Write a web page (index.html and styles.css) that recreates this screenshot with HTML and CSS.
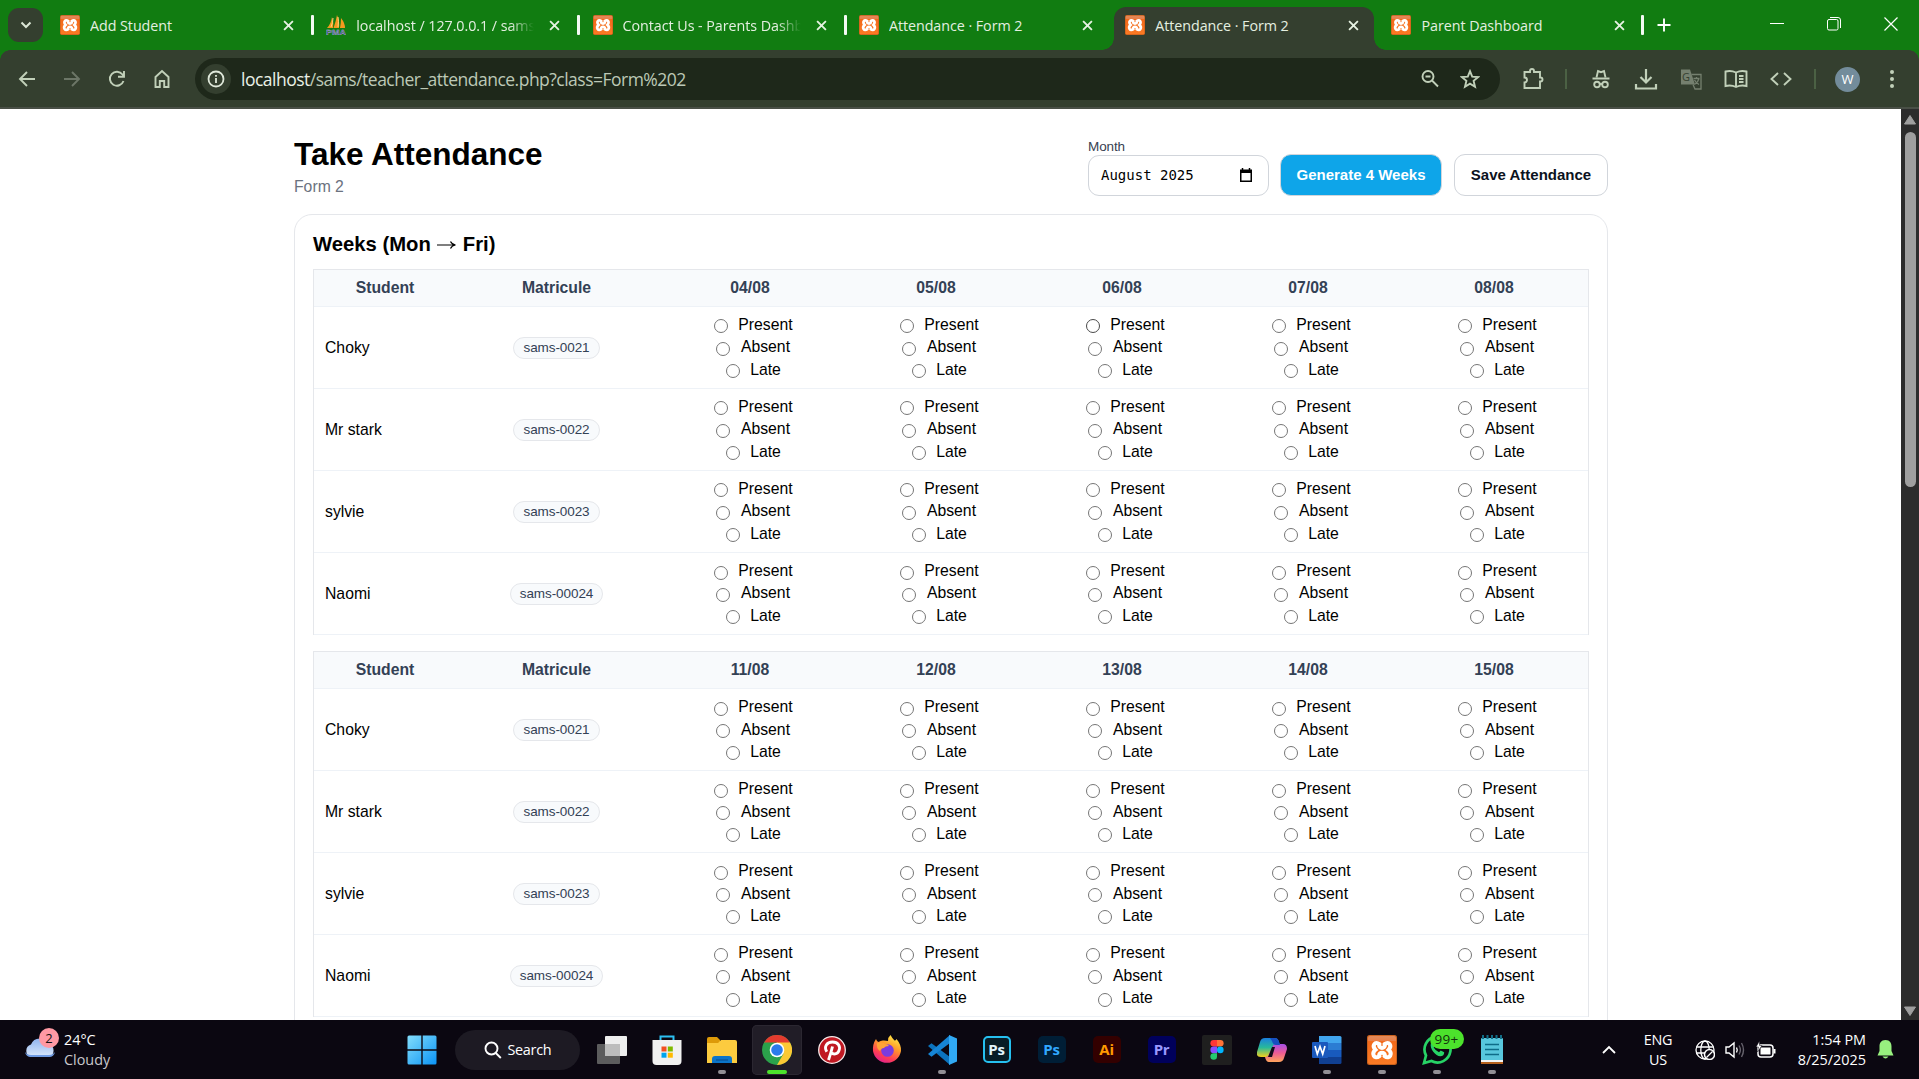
FILE: index.html
```html
<!DOCTYPE html>
<html lang="en">
<head>
<meta charset="utf-8">
<title>Attendance · Form 2</title>
<link rel="stylesheet" href="styles.css">
</head>
<body>
<svg class="defs" width="0" height="0" aria-hidden="true">
  <linearGradient id="org" x1="0" y1="0" x2="0" y2="1"><stop offset="0" stop-color="#e08a5c"/><stop offset=".16" stop-color="#e9804a"/><stop offset=".2" stop-color="#f3691a"/><stop offset="1" stop-color="#fb7a24"/></linearGradient>
  <symbol id="xampp" viewBox="0 0 30 30">
    <rect width="30" height="30" rx="2.5" fill="#c9601c"/><rect x="1" y="1" width="28" height="28" rx="2" fill="url(#org)"/>
    <path d="M12.5 9.2C8 5.800 4.500 10.500 8.500 14.800C4 18.500 7 25 12.500 21.200M17.500 9.200C22 5.800 25.500 10.500 21.500 14.800C26 18.500 23 25 17.500 21.200M12 9.500C12 14 18 14 18 9.500M12 21C12 16.500 18 16.500 18 21" fill="none" stroke="#fff" stroke-width="4" stroke-linecap="round"/>
  </symbol>
  <symbol id="x" viewBox="0 0 10 10"><path d="M1 1l8 8M9 1L1 9" stroke="#e6f2e2" stroke-width="1.7"/></symbol>
</svg>

<header class="tabs">
  <button class="tab-search"><svg width="12" height="8" viewBox="0 0 12 8"><path d="M1.500 1.500L6 6l4.500-4.500" fill="none" stroke="#dbe6d5" stroke-width="2"/></svg></button>
  <div class="tab"><svg class="fav"><use href="#xampp"/></svg><span class="tt">Add Student</span><svg class="close"><use href="#x"/></svg><i class="sep"></i></div>
  <div class="tab"><svg class="fav" viewBox="0 0 20 20"><path d="M1 13Q5 9 6 2Q8 8 7 13zM7.500 13Q10 6 11 0Q14 7 13 13zM14 13Q15 8 15 3Q19 8 19 13z" fill="#f39a1e"/><path d="M5 12Q7 8 7 3M12 12Q13 6 12 2" stroke="#ffd37a" fill="none"/><text x="0" y="19.500" textLength="20" lengthAdjust="spacingAndGlyphs" class="pma">PMA</text></svg><span class="tt faded">localhost / 127.0.0.1 / sams</span><svg class="close"><use href="#x"/></svg><i class="sep"></i></div>
  <div class="tab"><svg class="fav"><use href="#xampp"/></svg><span class="tt faded">Contact Us - Parents Dashboard</span><svg class="close"><use href="#x"/></svg><i class="sep"></i></div>
  <div class="tab"><svg class="fav"><use href="#xampp"/></svg><span class="tt">Attendance · Form 2</span><svg class="close"><use href="#x"/></svg></div>
  <div class="tab active"><svg class="fav"><use href="#xampp"/></svg><span class="tt">Attendance · Form 2</span><svg class="close"><use href="#x"/></svg></div>
  <div class="tab"><svg class="fav"><use href="#xampp"/></svg><span class="tt">Parent Dashboard</span><svg class="close"><use href="#x"/></svg><i class="sep"></i></div>
  <svg class="new" width="14" height="14" viewBox="0 0 14 14"><path d="M7 .5v13M.5 7h13" stroke="#fff" stroke-width="1.9"/></svg>
  <div class="win">
    <svg width="14" height="14" viewBox="0 0 14 14"><path d="M0 6.500h14" stroke="#fff"/></svg>
    <svg width="14" height="14" viewBox="0 0 14 14" fill="none" stroke="#fff"><rect x=".5" y="2.500" width="10.500" height="10.500" rx="1.500"/><path d="M3 .5h8a2.500 2.500 0 0 1 2.500 2.500v8"/></svg>
    <svg width="14" height="14" viewBox="0 0 14 14"><path d="M.5.5l13 13M13.500.5l-13 13" stroke="#fff" stroke-width="1.200"/></svg>
  </div>
</header>

<nav class="toolbar">
  <div class="nav">
    <svg viewBox="0 0 20 20"><path d="M18 10H3M10 3l-7 7 7 7"/></svg>
    <svg viewBox="0 0 20 20" class="dim"><path d="M2 10h15M10 3l7 7-7 7"/></svg>
    <svg viewBox="0 0 20 20"><path d="M16.500 12A7 7 0 1 1 15.500 5.500L17 7.500M17 2v5.800h-6"/></svg>
    <svg viewBox="0 0 20 20"><path d="M3.500 18V8L10 2l6.500 6v10h-4.300v-6H7.800v6z"/></svg>
  </div>
  <div class="omnibox">
    <span class="info"><svg width="18" height="18" viewBox="0 0 18 18"><circle cx="9" cy="9" r="7.500" fill="none" stroke="#dfe8da" stroke-width="1.800"/><path d="M9 8v5M9 5v1.700" stroke="#dfe8da" stroke-width="1.800"/></svg></span>
    <span class="url"><b>localhost</b>/sams/teacher_attendance.php?class=Form%202</span>
    <span class="obx">
      <svg viewBox="0 0 20 20"><circle cx="8" cy="7.500" r="5.500"/><path d="M12 11.500l6 6M5.500 7.500h5"/></svg>
      <svg viewBox="0 0 20 20"><path d="M10 2.200l2.200 5.400 5.800.5-4.400 3.800 1.400 5.800-5-3.100-5 3.100 1.400-5.800L2 8.100l5.800-.5z"/></svg>
    </span>
  </div>
  <div class="ext">
    <svg viewBox="0 0 24 24"><path d="M3.500 5H9V4a2 2 0 0 1 4 0v1h6v5.500h.5a2 2 0 0 1 0 4H19V21H3.500v-5.500a2.500 2.500 0 0 0 0-5z"/></svg>
    <i></i>
    <svg viewBox="0 0 24 24"><path d="M3.500 11.500h17" stroke-width="2"/><path d="M7.500 10.500L9 4l3 1.200L15 4l1.500 6.500" /><circle cx="8" cy="17.500" r="2.800"/><circle cx="16" cy="17.500" r="2.800"/><path d="M10.800 17h2.400"/></svg>
    <svg viewBox="0 0 24 24"><path d="M12 2v13M6.500 10l5.500 5.500 5.500-5.500M2 17v4.500h20V17" stroke-width="2.200"/></svg>
    <svg viewBox="0 0 24 24" class="tr"><path d="M2 2.500h9l5 15H2z" fill="#75806f" stroke="none"/><path d="M12.500 7.500h9.500v14.500h-6l-2-4.500M14.500 11.500h6M17.500 10v1.500M20 11.500q-1 4-4.500 6M15.500 13q1.500 3 4.500 4.500" stroke-width="1.300"/><text x="3" y="14">G</text></svg>
    <svg viewBox="0 0 24 24"><path d="M12 5.500Q7 3 1.500 4.500v14.500Q7 17.500 12 20q5-2.500 10.500-1V4.500Q17 3 12 5.500zM12 5.500V20M15 9h4.500M15 12h4.500M15 15h4.500"/></svg>
    <svg viewBox="0 0 24 24"><path d="M9 6l-6.500 6L9 18M15 6l6.500 6L15 18"/></svg>
    <i></i>
    <span class="avatar">W</span>
    <svg viewBox="0 0 24 24"><g fill="#c1d0b9" stroke="none"><circle cx="12" cy="5" r="2"/><circle cx="12" cy="12" r="2"/><circle cx="12" cy="19" r="2"/></g></svg>
  </div>
</nav>

<div class="view">
  <main class="page">
    <div class="head">
      <div><h1>Take Attendance</h1><div class="muted">Form 2</div></div>
      <div class="actions">
        <div class="field"><label>Month</label><div class="month"><span>August 2025</span><svg width="12" height="14" viewBox="0 0 12 14"><path d="M0 1.500h12V14H0zM1.500 5v7.500h9V5z" fill="#000" fill-rule="evenodd"/><path d="M2.500 0v2M9.500 0v2" stroke="#000" stroke-width="1.500"/></svg></div></div>
        <button class="btn primary">Generate 4 Weeks</button>
        <button class="btn">Save Attendance</button>
      </div>
    </div>
    <section class="card">
      <h2>Weeks (Mon <svg width="19" height="10" viewBox="0 0 19 10"><path d="M0 5h17.500M13.500 1.500Q15 4.500 18.500 5Q15 5.500 13.500 8.500" fill="none" stroke="#000" stroke-width="1.200"/></svg> Fri)</h2>
      <div id="weeks"></div>
    </section>
  </main>
  <div class="scroll"><svg width="12" height="10" viewBox="0 0 12 10"><path d="M6 .5L11.500 9H.5z" fill="#9f9f9f" stroke="#9f9f9f" stroke-linejoin="round"/></svg><div class="thumb"></div><svg width="12" height="10" viewBox="0 0 12 10"><path d="M6 9.500L.5 1h11z" fill="#9f9f9f" stroke="#9f9f9f" stroke-linejoin="round"/></svg></div>
</div>

<footer class="taskbar">
  <div class="weather">
    <span class="cloud"><svg width="32" height="22" viewBox="0 0 32 22"><linearGradient id="cl" x1="0" y1="0" x2="0" y2="1"><stop offset="0" stop-color="#8fb3ee"/><stop offset="1" stop-color="#dbe9fc"/></linearGradient><path d="M7 21a6.500 6.500 0 0 1 0-12.500A9.500 9.500 0 0 1 24.500 8a6.700 6.700 0 0 1 0 13z" fill="url(#cl)"/><path d="M1 16q1 5 6 5h18q5 0 6-5-2 3-6 3H7q-4 0-6-3z" fill="#6f9be4"/></svg><em>2</em></span>
    <span class="wt">24°C<br><small>Cloudy</small></span>
  </div>
  <div class="apps">
    <span class="app start"><svg width="30" height="30" viewBox="0 0 30 30"><linearGradient id="wn" x1="0" y1="0" x2="1" y2="1"><stop offset="0" stop-color="#83defc"/><stop offset="1" stop-color="#0b93f5"/></linearGradient><path d="M.5 2q0-1.500 1.500-1.500h12.300v13.800H.5zM15.700.5H28q1.500 0 1.500 1.500v12.300H15.700zM.5 15.700h13.800v13.800H2q-1.500 0-1.500-1.500zM15.700 15.700h13.800V28q0 1.500-1.500 1.500H15.700z" fill="url(#wn)"/></svg></span>
    <span class="search"><svg width="18" height="18" viewBox="0 0 18 18" fill="none" stroke="#fff" stroke-width="1.900"><circle cx="7.500" cy="7.500" r="6"/><path d="M11.800 12l5 5"/></svg>Search</span>
    <span class="app tv"><svg width="30" height="30" viewBox="0 0 30 30"><rect x="8" y="1" width="22" height="20" rx="1" fill="#eee"/><rect x="0" y="9" width="23" height="20" rx="1" fill="#6b6b6b" opacity=".85"/><rect x="8" y="9" width="15" height="12" fill="#bdbdbd"/></svg></span>
    <span class="app"><svg width="30" height="30" viewBox="0 0 30 30"><path d="M8.500 6V1.500h13V6" fill="none" stroke="#2cc0f2" stroke-width="2"/><path d="M.5 5h29v21q0 4-4 4h-21q-4 0-4-4z" fill="#f1f1f1"/><path d="M9.500 11.500h5v5h-5z" fill="#f25022"/><path d="M15.800 11.500h5v5h-5z" fill="#7fba00"/><path d="M9.500 17.700h5v5h-5z" fill="#00a4ef"/><path d="M15.800 17.700h5v5h-5z" fill="#ffb900"/></svg></span>
    <span class="app run"><svg width="30" height="30" viewBox="0 0 30 30"><path d="M0 4q0-2 2-2h8l3 3v5H0z" fill="#dd9a09"/><path d="M0 8h11l3-3h14q2 0 2 2v21H0z" fill="#fccb3f"/><path d="M5 28v-4q0-3 3-3h14q3 0 3 3v4z" fill="#0b74c9"/><path d="M9 25h12" stroke="#0a4f94" stroke-width="1.200"/></svg></span>
    <span class="app on"><svg width="30" height="30" viewBox="0 0 30 30"><circle cx="15" cy="15" r="15" fill="#2ba14b"/><path d="M15 15L2 7.500A15 15 0 0 1 28 7.500z" fill="#e33b2e"/><path d="M15 7.500h13A15 15 0 0 1 15 30l6.500-11.200z" fill="#fcc934"/><path d="M2 7.500L8.500 18.800 15 7.500z" fill="#2ba14b"/><circle cx="15" cy="15" r="7.300" fill="#fff"/><circle cx="15" cy="15" r="5.800" fill="#2b7bea"/></svg></span>
    <span class="app"><svg width="28" height="28" viewBox="0 0 28 28"><circle cx="14" cy="14" r="13.300" fill="#c01923" stroke="#f5e9e9" stroke-width="1.300"/><path d="M8.800 15.800C5.500 10.500 9 6 14.500 6s8.200 4.200 6.500 8.500c-1.500 4-6 4.500-7.200 1.800M14.500 10.500Q13 17 10.500 24" fill="none" stroke="#fff" stroke-width="2.900"/></svg></span>
    <span class="app"><svg width="30" height="30" viewBox="0 0 30 30"><linearGradient id="ff" x1=".8" y1="0" x2=".3" y2="1"><stop offset="0" stop-color="#fff04a"/><stop offset=".4" stop-color="#ff9a2a"/><stop offset=".75" stop-color="#ff3d55"/><stop offset="1" stop-color="#e0208f"/></linearGradient><path d="M18.500 0q1.500 3 4 5.500 1 .5 2-1.500 5 6 4.500 12A14.200 14.200 0 0 1 1 16Q.5 9 4 4q1 3 2.500 3Q9 5 12 5.500q2 0 4 .5Q16 2 18.500 0z" fill="url(#ff)"/><circle cx="15.500" cy="15.500" r="6.300" fill="#7a3be0"/><path d="M5 8q5-2 8 1 3 0 4 2-4 0-5 2-3 0-4 3Q4 13 5 8z" fill="#ffa436"/></svg></span>
    <span class="app run"><svg width="30" height="30" viewBox="0 0 30 30"><path d="M1 11l3.500-2.700L23 22v8z" fill="#0b73be"/><path d="M1 19l3.500 2.700L23 8V0z" fill="#1685d6"/><path d="M22 0l8 3.500v23L22 30z" fill="#31a9f4"/></svg></span>
    <span class="app"><b class="ad ps1">Ps</b></span>
    <span class="app"><b class="ad ps2">Ps</b></span>
    <span class="app"><b class="ad ai">Ai</b></span>
    <span class="app"><b class="ad pr">Pr</b></span>
    <span class="app"><svg width="30" height="30" viewBox="0 0 30 30"><rect width="30" height="30" rx="2" fill="#1f1f1f"/><path d="M15 5h-3.300a3.300 3.300 0 0 0 0 6.600H15z" fill="#ff3737"/><path d="M15 5h3.300a3.300 3.300 0 0 1 0 6.600H15z" fill="#ff7237"/><path d="M15 11.600h-3.300a3.300 3.300 0 0 0 0 6.600H15z" fill="#874fff"/><circle cx="18.300" cy="14.900" r="3.300" fill="#00b6ff"/><path d="M15 18.200h-3.300a3.300 3.300 0 1 0 3.300 3.300z" fill="#24cb71"/></svg></span>
    <span class="app"><svg width="30" height="26" viewBox="0 0 30 26"><linearGradient id="c1" x1="0" y1="0" x2="0" y2="1"><stop offset="0" stop-color="#1b7fe0"/><stop offset=".5" stop-color="#28b99a"/><stop offset="1" stop-color="#f3d01c"/></linearGradient><linearGradient id="c2" x1="0" y1="0" x2="0" y2="1"><stop offset="0" stop-color="#a64fe8"/><stop offset=".5" stop-color="#ee5b93"/><stop offset="1" stop-color="#ffa45c"/></linearGradient><path d="M8 1h10q3 0 4 4l1 3h-4q-3 0-4 3l-2 6q-1 3-4 3H4q-5 0-4-5L3 5q1-4 5-4z" fill="url(#c1)"/><path d="M22 25H12q-3 0-4-5 3 0 4-3l3-6q1-4 4-4h7q4 0 4 5l-3 9q-1 4-5 4z" fill="url(#c2)"/><path d="M13 1h5q3 0 4 4l1 3h-4q-3 0-4-4z" fill="#174fc0"/><path d="M15 10h3l-3 10h-4z" fill="#120b1a"/></svg></span>
    <span class="app run"><svg width="30" height="28" viewBox="0 0 30 28"><path d="M7 0h21q1.500 0 1.500 1.500V7H7z" fill="#41a5ee"/><path d="M7 7h22.500v7H7z" fill="#2b7cd3"/><path d="M7 14h22.500v7H7z" fill="#185abd"/><path d="M7 21h22.500v5.500q0 1.500-1.500 1.500H7z" fill="#103f91"/><rect x="0" y="6" width="16" height="16" rx="1" fill="#1a59bd"/><path d="M3 10l2.300 8L8 10.500l2.700 7.500L13 10" fill="none" stroke="#fff" stroke-width="1.700"/></svg></span>
    <span class="app run"><svg width="30" height="30"><use href="#xampp"/></svg></span>
    <span class="app run"><svg width="30" height="30" viewBox="0 0 30 30"><path d="M2 28l2-7.500A13 13 0 1 1 9.500 26z" fill="none" stroke="#27d366" stroke-width="2.700"/><path d="M9 8q2-2 3 0l1 2.500-1.300 2q2 3.500 5.300 4.800l1.700-1.800 3.500 1.800q0 4-4 4C14 21 7 14 9 8z" fill="#27d366"/></svg><em class="count">99+</em></span>
    <span class="app run"><svg width="24" height="30" viewBox="0 0 24 30"><rect x="1" y="3" width="22" height="26" rx="1" fill="#58c7dd"/><path d="M1 26h22v3H1z" fill="#b5601c"/><path d="M1 25h22v2H1z" fill="#f4f4f4"/><path d="M3 0v4M7.500 0v4M12 0v4M16.500 0v4M21 0v4" stroke="#116c86" stroke-width="2"/><path d="M5 9.500h14M5 14.500h14M5 19.500h14" stroke="#0e6c88" stroke-width="1.700"/></svg></span>
  </div>
  <div class="tray">
    <svg class="up" width="14" height="9" viewBox="0 0 14 9"><path d="M1 8l6-6 6 6" fill="none" stroke="#fff" stroke-width="1.800"/></svg>
    <span class="lang">ENG<br>US</span>
    <svg class="globe" width="20" height="20" viewBox="0 0 20 20" fill="none" stroke="#fff" stroke-width="1.300"><circle cx="10" cy="10" r="9"/><ellipse cx="10" cy="10" rx="4.200" ry="9"/><path d="M1.500 7h17M1.500 13h10"/><circle cx="14.500" cy="14.500" r="5" fill="#0b0711" stroke-width="1.500"/><path d="M11.500 17.500l6-6"/></svg>
    <svg class="vol" width="20" height="18" viewBox="0 0 20 18" fill="none" stroke="#fff" stroke-width="1.400"><path d="M1 6v6h3l5 4V2L4 6zM11.500 6.500q1.500 2.500 0 5"/><path d="M14 4.500q2.800 4.500 0 9M16.500 2q4 7 0 14" stroke="#66626c"/></svg>
    <svg class="bat" width="20" height="18" viewBox="0 0 20 18"><rect x="2" y="4" width="15" height="12" rx="3" fill="none" stroke="#fff" stroke-width="1.500"/><path d="M18.500 8v4.500" stroke="#fff" stroke-width="2"/><path d="M4.500 6.500h10v7h-10z" fill="#fff"/><path d="M3.500 0L0 6h2.500L1.500 11 6 4.500H3.500z" fill="#fff" stroke="#0b0711" stroke-width=".5"/></svg>
    <span class="clock">1:54 PM<br>8/25/2025</span>
    <svg class="bell" width="17" height="19" viewBox="0 0 17 19"><path d="M8.500 0C4 0 2.500 3 2.500 6.500V11L.5 15.500h16L14.500 11V6.500C14.500 3 13 0 8.500 0zM5.500 16.500q3 4 6 0z" fill="#98f07f"/></svg>
  </div>
</footer>
<script src="weeks.js"></script>
</body>
</html>
```

FILE: styles.css
```css
* { box-sizing: border-box; }
body { margin: 0; width: 1919px; height: 1079px; overflow: hidden; display: flex; flex-direction: column; background: #fff; font-family: "Open Sans", "Noto Sans", sans-serif; }
.defs { position: absolute; }
svg { display: block; flex: none; }
button { font: inherit; }
em { font-style: normal; }

/* tab strip */
.tabs { flex: none; height: 50px; background: #117c11; display: flex; align-items: flex-start; padding-left: 8px; }
.tab-search { width: 35px; height: 34px; margin-top: 8px; border: 0; border-radius: 11px; background: #343f2f; display: flex; align-items: center; justify-content: center; padding: 0; }
.tab { width: 266.3px; height: 50px; flex: none; display: flex; align-items: center; padding-left: 17px; }
.tab.active { position: relative; }
.tab.active::before { content: ""; position: absolute; left: 6px; right: 0; top: 7px; bottom: 0; background: #343f2f; border-radius: 12px 12px 0 0; }
.tab.active::after { content: ""; position: absolute; left: -6px; right: -12px; bottom: 0; height: 12px; background: radial-gradient(circle at 0 0, transparent 11.500px, #343f2f 12px) left / 12px 12px no-repeat, radial-gradient(circle at 100% 0, transparent 11.500px, #343f2f 12px) right / 12px 12px no-repeat; }
.tab.active > * { position: relative; z-index: 1; }
.fav { width: 20px; height: 20px; }
.pma { font: bold 8px "Liberation Sans", sans-serif; fill: #3d3f87; stroke: #c9c9e0; stroke-width: .3px; }
.tt { flex: none; width: 178px; margin-left: 10px; padding-top: 1px; font-size: 14.300px; line-height: 21px; color: #e4efe0; white-space: nowrap; overflow: hidden; letter-spacing: -.05px; }
.faded { -webkit-mask-image: linear-gradient(90deg, #000 154px, transparent 178px); mask-image: linear-gradient(90deg, #000 154px, transparent 178px); }
.close { width: 11px; height: 11px; margin-left: 15px; }
.sep { flex: none; width: 3px; height: 20px; margin-left: 17px; background: #f4faf4; border-radius: 1px; }
.tab:nth-child(7) .sep { margin-left: 16px; }
.new { margin: 18px 0 0 16px; }
.win { margin: 17px 21px 0 auto; display: flex; gap: 43px; }

/* toolbar */
.toolbar { flex: none; height: 59px; background: #343f2f; border-bottom: 2px solid #494f46; display: flex; align-items: flex-start; padding-top: 8px; position: relative; }
.toolbar::before, .toolbar::after { content: ""; position: absolute; top: 0; width: 10px; height: 10px; }
.toolbar::before { left: 0; background: radial-gradient(circle at 100% 100%, transparent 9.500px, #117c11 10px); }
.toolbar::after { right: 0; background: radial-gradient(circle at 0 100%, transparent 9.500px, #117c11 10px); }
.nav { flex: none; display: flex; gap: 25px; padding: 11px 0 0 17px; width: 195px; }
.nav svg, .obx svg { width: 20px; height: 20px; fill: none; stroke: #c1d0b9; stroke-width: 1.900; }
.nav .dim { stroke: #6c7667; }
.omnibox { flex: none; width: 1305px; height: 42px; border-radius: 21px; background: #1e281a; display: flex; align-items: center; padding-left: 6px; }
.info { width: 30px; height: 30px; border-radius: 50%; background: #343f2f; display: flex; align-items: center; justify-content: center; }
.url { margin-left: 10px; font-size: 17.500px; letter-spacing: -.51px; color: #bcc8b6; white-space: nowrap; }
.url b { font-weight: 400; color: #eaf1e6; }
.obx { margin: 0 20px 0 auto; display: flex; gap: 20px; }
.ext { flex: 1; min-width: 0; display: flex; align-items: center; height: 42px; padding-left: 21px; }
.ext svg { width: 24px; height: 24px; margin-right: 21px; fill: none; stroke: #c1d0b9; stroke-width: 1.900; }
.ext i { flex: none; width: 2px; height: 20px; background: #4b6144; margin: 0 22px 0 -1px; }
.ext i ~ i { margin: 0 19px 0 0; }
.ext .tr { stroke: #75806f; }
.tr text { font: 11px "Open Sans", sans-serif; fill: #343f2f; stroke: none; }
.avatar { flex: none; width: 25px; height: 25px; border-radius: 50%; background: #738c9b; color: #fff; font-size: 13px; display: flex; align-items: center; justify-content: center; margin-right: 20px; }

/* page */
.view { flex: 1; min-height: 0; display: flex; font-family: "Liberation Sans", Arial, sans-serif; font-size: 15.750px; color: #000; }
.page { flex: 1; overflow: hidden; padding: 27px 293px 0 294px; }
.head { display: flex; justify-content: space-between; height: 78px; }
h1 { margin: 0; font-size: 31.500px; line-height: 36px; }
.muted { color: #6b7280; line-height: 18px; margin-top: 6px; }
.actions { display: flex; align-items: flex-start; gap: 12px; }
.field label { display: block; font-size: 13.500px; line-height: 16px; margin-top: 3px; color: #374151; letter-spacing: -.1px; }
.month { width: 181px; height: 41px; border: 1px solid #d1d5db; border-radius: 11px; display: flex; align-items: center; justify-content: space-between; padding: 0 16px 1px 12px; font-family: "DejaVu Sans Mono", monospace; font-size: 14px; }
.btn { height: 42px; margin-top: 18px; border: 1px solid #d1d5db; border-radius: 11px; background: #fff; color: #0b1220; font-size: 15px; font-weight: 700; padding: 0 0 2px; width: 154px; }
.btn.primary { background: #0ea5e9; color: #fff; width: 162px; }
.field { margin-right: -1px; }
.card { width: 1314px; height: 900px; border: 1px solid #e5e7eb; border-radius: 18px; padding: 18px 18px 0; }
h2 { margin: 0 0 13px; font-size: 20.250px; line-height: 23px; display: flex; align-items: center; gap: 6.500px; }
.week { width: 1276px; margin-bottom: 16px; border: 1px solid #e5e7eb; border-bottom: 0; }
.row { display: grid; grid-template-columns: 142px 201px repeat(5, 186px); height: 82.050px; align-items: center; justify-items: center; border-bottom: 1px solid #eef2f7; }
.row.th { height: 37px; background: #f8fafc; font-weight: 700; color: #334155; }
.name { justify-self: start; padding-left: 11px; }
.pill { font-size: 13.500px; height: 22px; line-height: 19px; border: 1px solid #e5e7eb; border-radius: 11px; background: #f8fafc; color: #334155; padding: 0 9px; letter-spacing: -.08px; }
.opt { display: flex; justify-content: center; align-items: center; line-height: 22.400px; }
.opt input { appearance: none; width: 14px; height: 14px; margin: 2.500px 10.500px 0 6.500px; border: 1px solid #767676; border-radius: 50%; background: #fff; }
.opt input.hover { border-color: #4a4a4a; }
.scroll { width: 18px; background: #2c2c2c; display: flex; flex-direction: column; align-items: center; padding: 6px 0 4px; }
.thumb { width: 11px; height: 355px; margin: 7px 0 auto; border-radius: 6px; background: #9f9f9f; }

/* taskbar */
.taskbar { flex: none; height: 59px; background: #0b0711; color: #fff; display: flex; font-size: 14.400px; line-height: 20px; letter-spacing: 0; }
.weather { width: 394px; display: flex; padding: 9px 0 0 24px; }
.cloud { position: relative; width: 32px; padding-top: 7px; }
.cloud em { position: absolute; left: 15px; top: -1px; width: 20px; height: 20px; border-radius: 50%; background: #ff99a4; color: #111; text-align: center; font-size: 13px; }
.wt { margin: 1px 0 0 8px; }
.wt small { font-size: inherit; color: #c9c7cc; }
.apps { display: flex; gap: 5px; padding-top: 5px; }
.app { width: 50px; height: 50px; display: flex; align-items: center; justify-content: center; position: relative; border-radius: 5px; }
.start { margin-left: 2.500px; }
.search { width: 125px; height: 40px; margin: 5px 2px 0 3px; border-radius: 20px; background: #1d1a23; display: flex; align-items: center; padding-left: 29px; gap: 6px; letter-spacing: -.3px; }
.on { background: #211d27; box-shadow: inset 0 0 0 1px #2b2731; }
.run::after, .on::after { content: ""; position: absolute; left: 21px; bottom: 1px; width: 8px; height: 4px; border-radius: 2px; background: #918e95; }
.on::after { left: 15px; width: 20px; background: #4ce22c; }
.ad { width: 28px; height: 27px; margin-bottom: 2px; border-radius: 5px; font-size: 15px; display: flex; align-items: center; justify-content: center; letter-spacing: -.3px; }
.ps1 { background: #071d26; border: 2px solid #26c0f0; color: #e0f5fc; }
.ps2 { background: #001e36; color: #31a8ff; }
.ai { background: #330000; color: #ff9a00; }
.pr { background: #00005b; color: #9999ff; }
.count { position: absolute; left: 18px; top: 4px; width: 34px; height: 20px; border-radius: 10px; background: #4ce22c; color: #12300c; font-size: 13.500px; line-height: 20px; text-align: center; letter-spacing: .3px; }
.tray { margin-left: auto; display: flex; align-items: center; padding-right: 25px; }
.lang { width: 40px; text-align: center; margin: 0 17px 0 22px; letter-spacing: -.2px; }
.vol { margin: 0 11px 0 10px; }
.clock { width: 90px; text-align: right; }
.bell { margin-left: 11px; }
```

FILE: weeks.js
```js
const students = [["Choky", "sams-0021"], ["Mr stark", "sams-0022"], ["sylvie", "sams-0023"], ["Naomi", "sams-00024"]];
const weeks = [["04/08", "05/08", "06/08", "07/08", "08/08"], ["11/08", "12/08", "13/08", "14/08", "15/08"]];

const options = (name, hover) => "<div>" + ["Present", "Absent", "Late"].map((s) =>
  `<label class="opt"><input type="radio" name="${name}"${hover && s === "Present" ? ' class="hover"' : ""}>${s}</label>`).join("") + "</div>";

document.getElementById("weeks").innerHTML = weeks.map((days, w) => `
  <div class="week">
    <div class="row th"><span>Student</span><span>Matricule</span>${days.map((d) => `<span>${d}</span>`).join("")}</div>
    ${students.map(([name, id], s) => `<div class="row"><span class="name">${name}</span><span class="pill">${id}</span>${
      days.map((d, i) => options(id + d, w === 0 && s === 0 && i === 2)).join("")}</div>`).join("")}
  </div>`).join("");
```
